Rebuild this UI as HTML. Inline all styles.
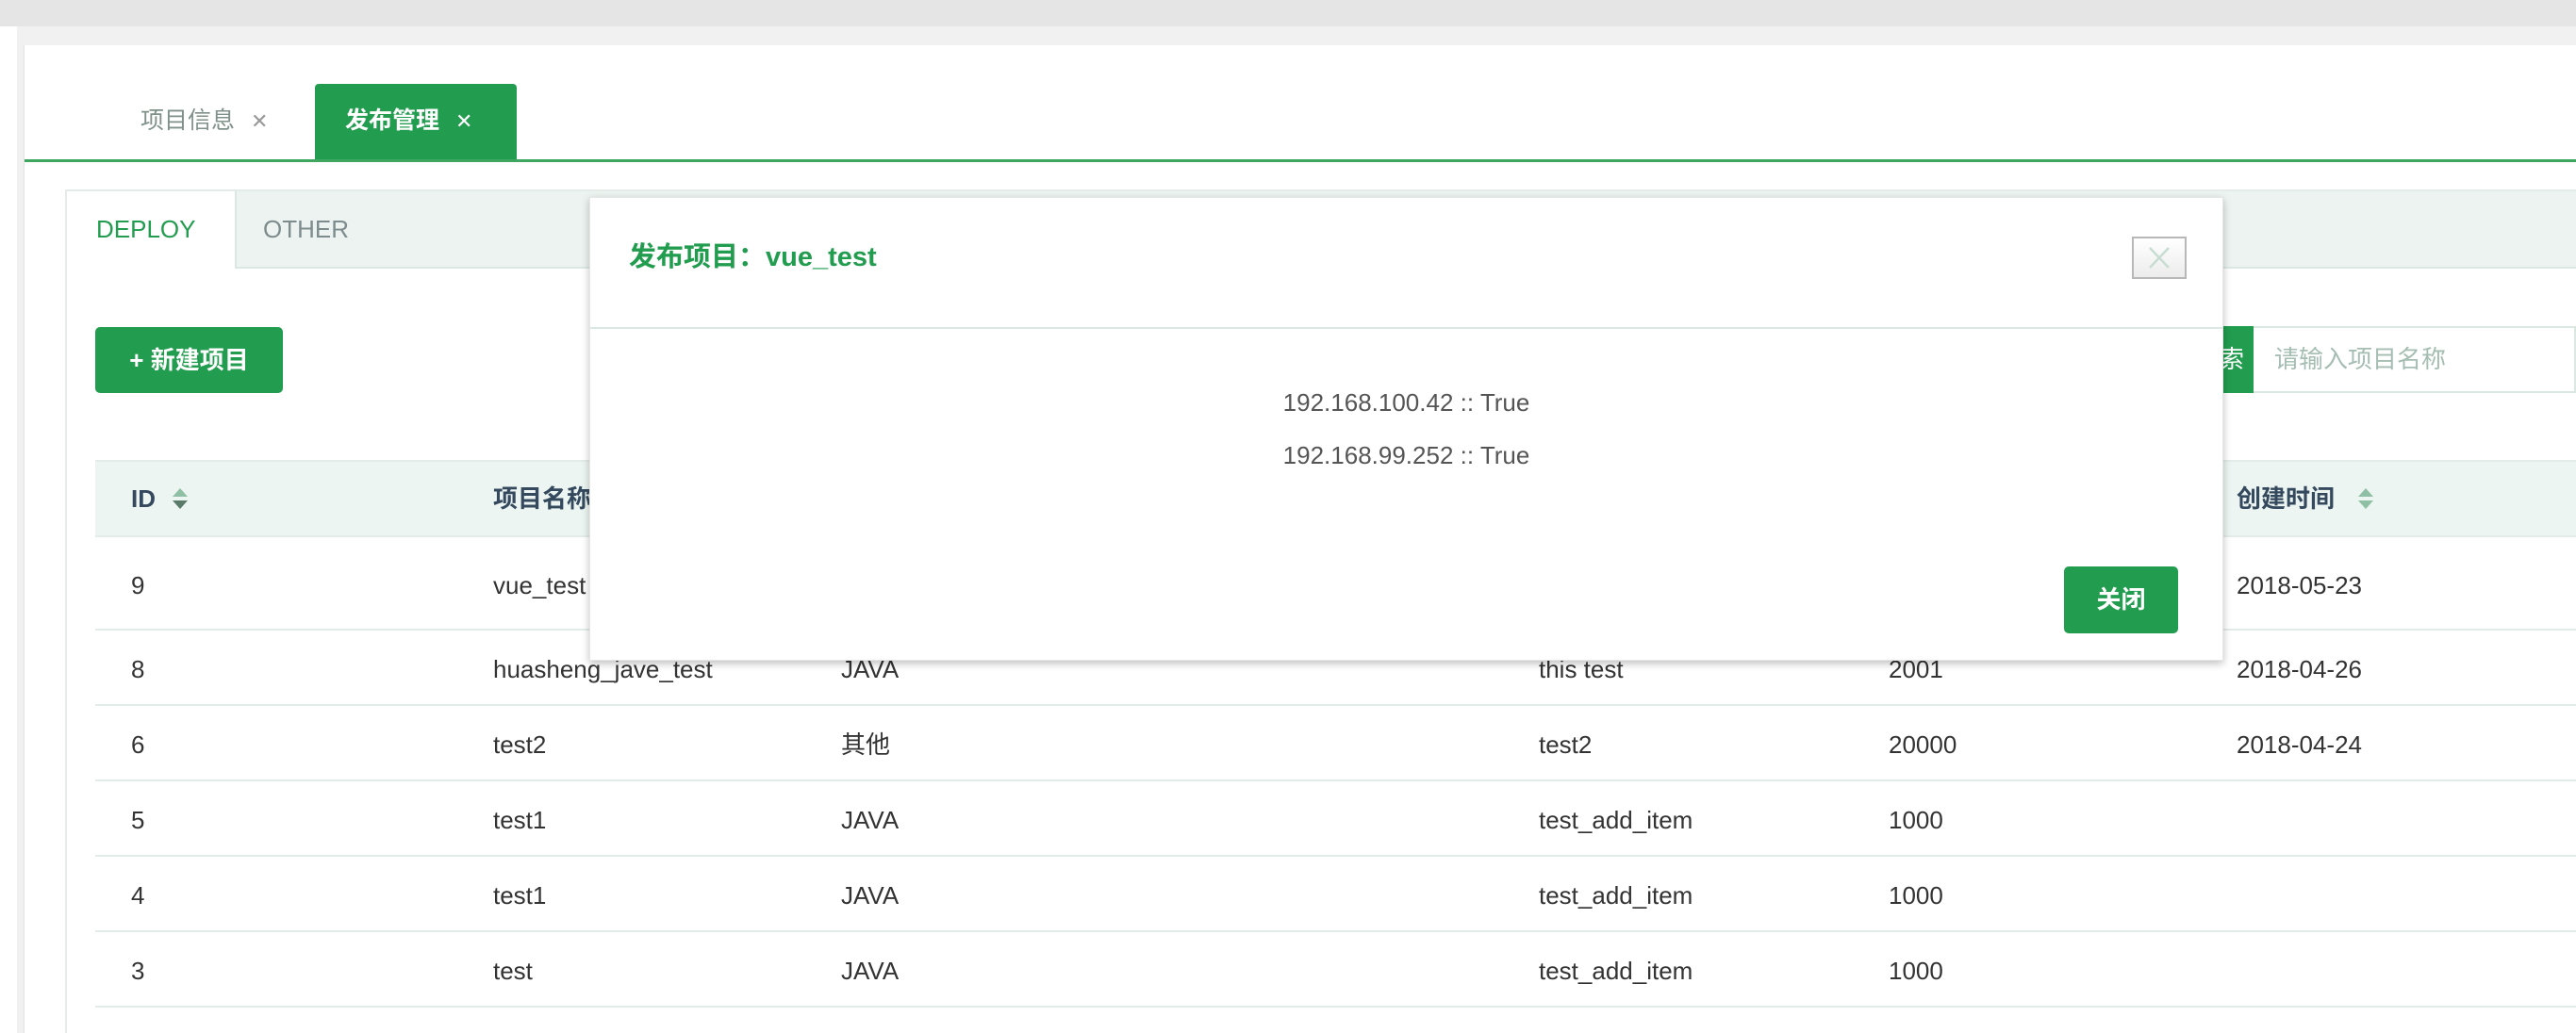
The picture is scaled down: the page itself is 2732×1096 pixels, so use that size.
<!DOCTYPE html>
<html><head><meta charset="utf-8"><style>
*{margin:0;padding:0;box-sizing:border-box}
body{width:2732px;height:1096px;overflow:hidden;background:#fff;font-family:"Liberation Sans","Noto Sans CJK SC",sans-serif;position:relative}
.a{position:absolute}
.g{background:#229c4f}
.cell{position:absolute;font-size:26px;color:#333;line-height:26px}
.row{position:absolute;left:101px;right:0;border-bottom:2px solid #e4ecea}
.hd{font-size:26px;color:#34495e;font-weight:bold}
</style></head><body>
<div class="a" style="left:0;top:0;width:2732px;height:28px;background:#e5e5e5"></div>
<div class="a" style="left:18px;top:28px;width:2714px;height:20px;background:#f1f1f1"></div>
<div class="a" style="left:18px;top:28px;width:8px;height:1068px;background:#f1f1f1"></div>
<div class="a" style="left:25px;top:48px;width:1px;height:1048px;background:#e2e2e2"></div>

<div class="a" style="left:149px;top:113px;font-size:25px;color:#7f9189;line-height:30px">项目信息 <span style="margin-left:10px;color:#999;font-size:22px">✕</span></div>
<div class="a g" style="left:334px;top:89px;width:214px;height:82px;border-radius:4px 4px 0 0"></div>
<div class="a" style="left:366px;top:113px;font-size:25px;color:#fff;font-weight:bold;line-height:30px">发布管理 <span style="margin-left:10px;font-weight:normal;font-size:22px">✕</span></div>
<div class="a" style="left:26px;top:169px;width:2706px;height:3px;background:#3fa660"></div>

<div class="a" style="left:69px;top:201px;width:2663px;height:895px;border-left:2px solid #e4ecea;border-top:2px solid #e4ecea"></div>
<div class="a" style="left:249px;top:201px;width:2483px;height:84px;background:#ecf3f0;border-bottom:2px solid #dbe8e2;border-top:2px solid #e4ecea;border-left:2px solid #dbe8e2"></div>
<div class="a" style="left:102px;top:229px;font-size:26px;color:#229c4f;line-height:28px">DEPLOY</div>
<div class="a" style="left:279px;top:229px;font-size:26px;color:#7f8c8d;line-height:28px">OTHER</div>

<div class="a g" style="left:101px;top:347px;width:199px;height:70px;border-radius:5px;color:#fff;font-size:26px;font-weight:bold;line-height:70px;text-align:center">+ 新建项目</div>

<div class="a g" style="left:2250px;top:346px;width:140px;height:71px;color:#fff;font-size:26px;line-height:71px;text-align:right;padding-right:10px">搜索</div>
<div class="a" style="left:2390px;top:346px;width:342px;height:71px;border:2px solid #dbe8e2;border-left:none;font-size:26px;color:#a5bdb2;line-height:67px;padding-left:22px">请输入项目名称</div>

<div class="a" style="left:101px;top:488px;width:2631px;height:82px;background:#ecf5f1;border-top:2px solid #e4ecea;border-bottom:2px solid #e4ecea"></div>
<div class="cell hd" style="left:139px;top:516px">ID</div>
<svg class="a" style="left:180px;top:516px" width="22" height="26" viewBox="0 0 22 26"><path d="M11 2L19 11H3Z" fill="#8fbfa4"/><path d="M11 24L19 15H3Z" fill="#5a7a6a"/></svg>
<div class="cell hd" style="left:523px;top:516px">项目名称</div>
<div class="cell hd" style="left:2372px;top:516px">创建时间</div>
<svg class="a" style="left:2498px;top:516px" width="22" height="26" viewBox="0 0 22 26"><path d="M11 2L19 11H3Z" fill="#8fbfa4"/><path d="M11 24L19 15H3Z" fill="#8fbfa4"/></svg>

<div class="row" style="top:570px;height:99px"></div>
<div class="row" style="top:669px;height:80px"></div>
<div class="row" style="top:749px;height:80px"></div>
<div class="row" style="top:829px;height:80px"></div>
<div class="row" style="top:909px;height:80px"></div>
<div class="row" style="top:989px;height:80px"></div>

<div class="cell" style="left:139px;top:608px">9</div><div class="cell" style="left:523px;top:608px">vue_test</div><div class="cell" style="left:2372px;top:608px">2018-05-23</div>
<div class="cell" style="left:139px;top:697px">8</div><div class="cell" style="left:523px;top:697px">huasheng_jave_test</div><div class="cell" style="left:892px;top:697px">JAVA</div><div class="cell" style="left:1632px;top:697px">this test</div><div class="cell" style="left:2003px;top:697px">2001</div><div class="cell" style="left:2372px;top:697px">2018-04-26</div>
<div class="cell" style="left:139px;top:777px">6</div><div class="cell" style="left:523px;top:777px">test2</div><div class="cell" style="left:892px;top:777px">其他</div><div class="cell" style="left:1632px;top:777px">test2</div><div class="cell" style="left:2003px;top:777px">20000</div><div class="cell" style="left:2372px;top:777px">2018-04-24</div>
<div class="cell" style="left:139px;top:857px">5</div><div class="cell" style="left:523px;top:857px">test1</div><div class="cell" style="left:892px;top:857px">JAVA</div><div class="cell" style="left:1632px;top:857px">test_add_item</div><div class="cell" style="left:2003px;top:857px">1000</div>
<div class="cell" style="left:139px;top:937px">4</div><div class="cell" style="left:523px;top:937px">test1</div><div class="cell" style="left:892px;top:937px">JAVA</div><div class="cell" style="left:1632px;top:937px">test_add_item</div><div class="cell" style="left:2003px;top:937px">1000</div>
<div class="cell" style="left:139px;top:1017px">3</div><div class="cell" style="left:523px;top:1017px">test</div><div class="cell" style="left:892px;top:1017px">JAVA</div><div class="cell" style="left:1632px;top:1017px">test_add_item</div><div class="cell" style="left:2003px;top:1017px">1000</div>

<div class="a" style="left:625px;top:209px;width:1733px;height:492px;background:#fff;box-shadow:0 3px 8px rgba(0,0,0,0.25);border:1px solid #e6e6e6">
  <div class="a" style="left:41px;top:47px;font-size:29px;font-weight:bold;color:#229c4f;line-height:32px">发布项目：vue_test</div>
  <div class="a" style="left:1635px;top:41px;width:58px;height:45px;border:2px solid #b8b8b8;background:linear-gradient(#fff,#ececec)">
    <svg width="54" height="41" viewBox="0 0 54 41" style="position:absolute;left:0;top:0"><path d="M17 10L37 31M37 10L17 31" stroke="#c8ddd2" stroke-width="2.5"/></svg>
  </div>
  <div class="a" style="left:0;top:137px;width:100%;height:2px;background:#dbe8e2"></div>
  <div class="a" style="left:0;top:202px;width:100%;text-align:center;font-size:26px;color:#555;line-height:30px">192.168.100.42 :: True</div>
  <div class="a" style="left:0;top:258px;width:100%;text-align:center;font-size:26px;color:#555;line-height:30px">192.168.99.252 :: True</div>
  <div class="a g" style="left:1563px;top:391px;width:121px;height:71px;border-radius:5px;color:#fff;font-size:26px;font-weight:bold;line-height:71px;text-align:center">关闭</div>
</div>
</body></html>
